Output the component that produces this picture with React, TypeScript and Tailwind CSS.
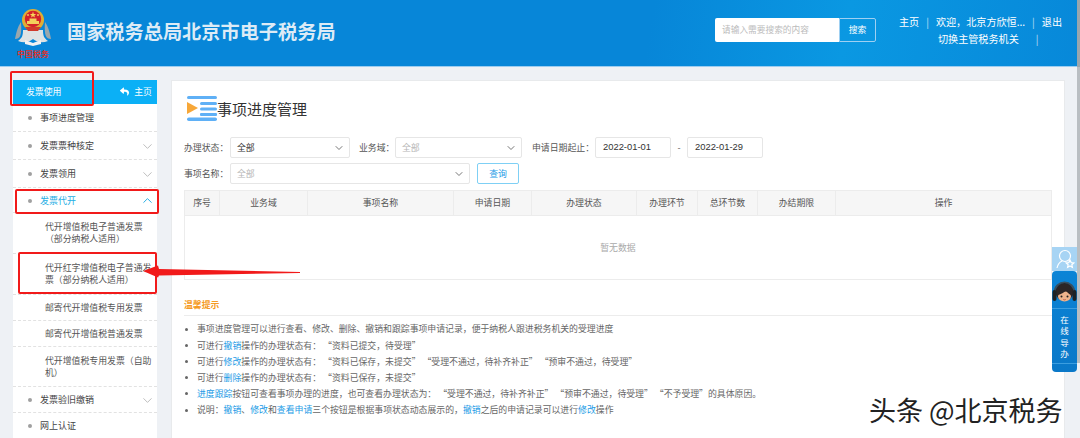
import { ChevronDown, ChevronUp } from "lucide-react";
import { FaReply } from "react-icons/fa";

const font = "font-['Noto_Sans_CJK_SC','Noto_Sans',sans-serif]";

function Emblem() {
  return (
    <svg width="40" height="38" viewBox="0 0 40 38" className="block">
      <path d="M2 31 C7 31 9 28 8 14 C5 18 3 25 2 31Z" fill="#9aa7ac" />
      <path d="M38 31 C33 31 31 28 32 14 C35 18 37 25 38 31Z" fill="#9aa7ac" />
      <path d="M5 33 C10 35 15 35 20 31 C25 35 30 35 35 33 C31 30 30 28 30 22 L10 22 C10 28 9 30 5 33Z" fill="#dfe3e4" />
      <path d="M12 32 L20 35 L28 32 L28 36 L20 38 L12 36Z" fill="#f2f2f2" />
      <circle cx="20" cy="12" r="11" fill="#e0ad33" />
      <circle cx="20" cy="11" r="8.2" fill="#d3212a" />
      <rect x="14" y="13" width="12" height="3" fill="#f3cf5b" />
      <rect x="16.5" y="10.5" width="7" height="2.5" fill="#f3cf5b" />
      <path d="M20 3.5 L20.8 6 L23.2 6 L21.3 7.4 L22 9.6 L20 8.3 L18 9.6 L18.7 7.4 L16.8 6 L19.2 6Z" fill="#f7d65a" />
      <circle cx="15" cy="7" r="0.9" fill="#f7d65a" />
      <circle cx="25" cy="7" r="0.9" fill="#f7d65a" />
      <path d="M12 19 L28 19 L25 23 L15 23Z" fill="#d03a2c" />
    </svg>
  );
}

function TitleIcon() {
  return (
    <svg width="32" height="27" viewBox="0 0 32 27" className="block">
      <rect x="1" y="1" width="30" height="3" rx="1.5" fill="#5fb0f6" />
      <path d="M1 7 L12 13 L1 19Z" fill="#f7a738" />
      <rect x="14" y="7" width="17" height="3" rx="1.5" fill="#5fb0f6" />
      <rect x="14" y="12.5" width="17" height="3" rx="1.5" fill="#5fb0f6" />
      <rect x="14" y="18" width="17" height="3" rx="1" fill="#5fb0f6" />
      <rect x="1" y="22.5" width="30" height="3.5" rx="1.75" fill="#5fb0f6" />
    </svg>
  );
}

function Row({ label, h, arrow, active }: { label: string; h: string; arrow?: boolean; active?: boolean }) {
  return (
    <div className={`${h} flex items-center pt-[1px] pl-[15px] pr-[2px] border-b border-dashed border-[#e2e2e2]`}>
      <span className="w-[4px] h-[4px] rounded-full bg-[#a0a0a0] mr-[8px] shrink-0" />
      <span className={`flex-1 text-[9px] ${active ? "text-[#25aee4]" : "text-[#444]"}`}>{label}</span>
      {arrow && !active && <ChevronDown className="w-[15px] h-[15px] text-[#b4b4b4]" strokeWidth={1.4} />}
      {active && <ChevronUp className="w-[15px] h-[15px] text-[#25aee4]" strokeWidth={1.6} />}
    </div>
  );
}

function SubRow({ h, lines }: { h: string; lines: string[] }) {
  return (
    <div className={`${h} flex flex-col justify-center pl-[32px] pr-[3px] border-b border-dashed border-[#e2e2e2] text-[8.9px] leading-[12px] text-[#555]`}>
      {lines.map((l) => (
        <div key={l} className="whitespace-nowrap">{l}</div>
      ))}
    </div>
  );
}

function Sel({ w, text, dim }: { w: string; text: string; dim?: boolean }) {
  return (
    <div className={`${w} h-[21px] flex items-center justify-between pl-[6px] pr-[4px] border border-[#e6e6e6] rounded-[2px] bg-white text-[8.9px] ${dim ? "text-[#b5b5b5]" : "text-[#333]"}`}>
      <span>{text}</span>
      <ChevronDown className="w-[12px] h-[12px] text-[#777]" />
    </div>
  );
}

const cols: [string, string][] = [
  ["序号", "w-[35px]"],
  ["业务域", "w-[88px]"],
  ["事项名称", "w-[146px]"],
  ["申请日期", "w-[78px]"],
  ["办理状态", "w-[105px]"],
  ["办理环节", "w-[61px]"],
  ["总环节数", "w-[60px]"],
  ["办结期限", "w-[78px]"],
  ["操作", "flex-1"],
];

function B({ children }: { children: string }) {
  return <span className="text-[#1c9be6]">{children}</span>;
}

function Tip({ children }: { children: React.ReactNode }) {
  return (
    <li className="h-[16.2px] flex items-center whitespace-nowrap">
      <span className="w-[3px] h-[3px] rounded-full bg-[#666] ml-[1px] mr-[9px] shrink-0" />
      <span>{children}</span>
    </li>
  );
}

export default function App() {
  return (
    <div lang="zh-CN" className={`relative w-[1080px] h-[438px] overflow-hidden bg-[#eef1f5] ${font}`}>
      {/* top bar */}
      <header className="h-[67px] flex items-center border-b border-[#9dcdf0] bg-[linear-gradient(100deg,#0786d8_0%,#0786d8_60%,#0a98e2_78%,#0788d9_100%)] text-white">
        <div className="ml-[13px] flex flex-col items-center w-[40px]">
          <Emblem />
          <span className="mt-[3px] text-[8px] leading-[10px] font-bold text-[#d8332f] whitespace-nowrap">中国税务</span>
        </div>
        <h1 className="ml-[14px] -mt-[3px] text-[19.2px] font-bold text-[#dcebf6] whitespace-nowrap">国家税务总局北京市电子税务局</h1>
        <div className="ml-auto flex items-center -mt-[6px]">
          <div className="w-[124px] h-[24px] bg-white rounded-l-[2px] flex items-center pl-[7px] text-[8.7px] text-[#bbb]">请输入需要搜索的内容</div>
          <div className="w-[37px] h-[24px] border border-[#9fd0f2] rounded-r-[2px] flex items-center justify-center text-[8.9px]">搜索</div>
        </div>
        <div className="w-[178px] ml-[23px] -mt-[6px] text-[10.1px] leading-[17px] whitespace-nowrap">
          <div className="flex">
            <span>主页</span>
            <span className="mx-[7px] opacity-70">|</span>
            <span>{"欢迎\uFF0C北京方欣恒..."}</span>
            <span className="mx-[7px] opacity-70">|</span>
            <span>退出</span>
          </div>
          <div className="flex pl-[39px]">
            <span>切换主管税务机关</span>
            <span className="ml-[17px] opacity-70">|</span>
          </div>
        </div>
        <div className="w-[3px] h-[67px] bg-[#9aa6ad]" />
      </header>

      <div className="flex pt-[13px] pl-[13px]">
        {/* left menu */}
        <aside className="w-[144px] bg-white shrink-0 h-[360px]">
          <div className="h-[24px] bg-[#0bb0f6] text-white flex items-center justify-between pl-[13px] pr-[5px] text-[8.9px]">
            <span>发票使用</span>
            <span className="flex items-center gap-[5px]">
              <FaReply className="w-[9px] h-[9px]" />
              主页
            </span>
          </div>
          <Row label="事项进度管理" h="h-[28px]" />
          <Row label="发票票种核定" h="h-[28px]" arrow />
          <Row label="发票领用" h="h-[28px]" arrow />
          <Row label="发票代开" h="h-[25px]" active />
          <SubRow h="h-[41px]" lines={["代开增值税电子普通发票", "\uFF08部分纳税人适用\uFF09"]} />
          <SubRow h="h-[41px]" lines={["代开红字增值税电子普通发", "票\uFF08部分纳税人适用\uFF09"]} />
          <SubRow h="h-[26px]" lines={["邮寄代开增值税专用发票"]} />
          <SubRow h="h-[26px]" lines={["邮寄代开增值税普通发票"]} />
          <SubRow h="h-[40px]" lines={["代开增值税专用发票\uFF08自助", "机\uFF09"]} />
          <Row label="发票验旧缴销" h="h-[26px]" arrow />
          <Row label="网上认证" h="h-[26px]" />
        </aside>

        {/* main card */}
        <main className="ml-[14px] w-[894px] h-[360px] bg-white border border-[#e8eaec] pl-[12px] pr-[12px] text-[#555]">
          <div className="flex items-center h-[27px] mt-[14px] ml-[2px]">
            <TitleIcon />
            <h2 className="-ml-[1px] mt-[2px] text-[15px] text-[#333] whitespace-nowrap">事项进度管理</h2>
          </div>

          <div className="mt-[15px] flex items-center h-[21px] text-[8.9px]">
            <span className="w-[46px]">{"办理状态\uFF1A"}</span>
            <Sel w="w-[120px]" text="全部" />
            <span className="ml-[9px] w-[36px]">{"业务域\uFF1A"}</span>
            <Sel w="w-[127px]" text="全部" dim />
            <span className="ml-[10px] w-[63px]">{"申请日期起止\uFF1A"}</span>
            <div className="w-[76px] h-[21px] border border-[#e6e6e6] rounded-[2px] flex items-center pl-[7px] text-[#333] font-['Liberation_Sans'] text-[9.4px]">2022-01-01</div>
            <span className="w-[16px] text-center">-</span>
            <div className="w-[76px] h-[21px] border border-[#e6e6e6] rounded-[2px] flex items-center pl-[7px] text-[#333] font-['Liberation_Sans'] text-[9.4px]">2022-01-29</div>
          </div>

          <div className="mt-[5px] flex items-center h-[21px] text-[8.9px]">
            <span className="w-[46px]">{"事项名称\uFF1A"}</span>
            <Sel w="w-[240px]" text="全部" dim />
            <div className="ml-[7px] w-[42px] h-[21px] border border-[#7fd0f5] rounded-[2px] flex items-center justify-center text-[#1c9be6]">查询</div>
          </div>

          <div className="mt-[6px] border-l border-r border-[#ececec] h-[90px] border-b">
            <div className="flex h-[26px] bg-[#f6f6f6] border-t border-b border-[#ececec] text-[8.9px]">
              {cols.map(([name, w]) => (
                <div key={name} className={`${w} flex items-center justify-center border-r border-[#ececec] last:border-r-0`}>{name}</div>
              ))}
            </div>
            <div className="h-[63px] flex items-center justify-center text-[8.9px] text-[#aaa]">暂无数据</div>
          </div>

          <div className="mt-[16px] text-[8.9px] font-bold text-[#f59a23] h-[17px] flex items-center">温馨提示</div>
          <div className="h-px bg-[#ececec] mt-[2px]" />
          <ul className="mt-[5px] text-[8.87px] text-[#666]">
            <Tip>{"事项进度管理可以进行查看、修改、删除、撤销和跟踪事项申请记录\uFF0C便于纳税人跟进税务机关的受理进度"}</Tip>
            <Tip>可进行<B>撤销</B>{"操作的办理状态有\uFF1A \u201C资料已提交\uFF0C待受理\u201D"}</Tip>
            <Tip>可进行<B>修改</B>{"操作的办理状态有\uFF1A \u201C资料已保存\uFF0C未提交\u201D \u201C受理不通过\uFF0C待补齐补正\u201D \u201C预审不通过\uFF0C待受理\u201D"}</Tip>
            <Tip>可进行<B>删除</B>{"操作的办理状态有\uFF1A \u201C资料已保存\uFF0C未提交\u201D"}</Tip>
            <Tip><B>进度跟踪</B>{"按钮可查看事项办理的进度\uFF0C也可查看办理状态为\uFF1A \u201C受理不通过\uFF0C待补齐补正\u201D \u201C预审不通过\uFF0C待受理\u201D \u201C不予受理\u201D的具体原因。"}</Tip>
            <Tip>{"说明\uFF1A"}<B>撤销</B>、<B>修改</B>和<B>查看申请</B>{"三个按钮是根据事项状态动态展示的\uFF0C"}<B>撤销</B>之后的申请记录可以进行<B>修改</B>操作</Tip>
          </ul>
        </main>
      </div>

      {/* scroll gutter */}
      <div className="absolute right-0 top-[67px] w-[3px] h-[296px] bg-[#b9bec2]" />

      {/* floating helper */}
      <div className="absolute left-[1052px] top-[247px] w-[25px]">
        <div className="h-[24px] bg-[#a7d4f4] flex items-center justify-center">
          <svg width="20" height="20" viewBox="0 0 20 20" fill="none" stroke="#fff" strokeWidth="1.2">
            <circle cx="10" cy="7" r="5.5" />
            <path d="M2 19 C3 14 5 13 7 12" />
            <path d="M15 11 l1.2 2.6 2.6 .3 -2 1.8 .6 2.7 -2.4 -1.4 -2.4 1.4 .6 -2.7 -2 -1.8 2.6 -.3Z" />
          </svg>
        </div>
        <div className="h-[101px] bg-[linear-gradient(180deg,#0b84d6,#0a78c8)] rounded-[4px] flex flex-col items-center text-white">
          <svg width="25" height="23" viewBox="0 0 25 23" className="mt-[10px] mb-[4px]">
            <path d="M2.5 12 C2.5 -2 22.5 -2 22.5 12" fill="none" stroke="#39505f" strokeWidth="2" />
            <ellipse cx="12.5" cy="11" rx="9" ry="9" fill="#2c2626" />
            <ellipse cx="12.5" cy="15.5" rx="6.5" ry="5" fill="#eeb48c" />
            <path d="M6 14 C9 13 12 11.5 14 9.5 C15.5 12 17 13 19 14 L19 8 L6 8Z" fill="#2c2626" />
            <rect x="0.5" y="9" width="4" height="11" rx="2" fill="#1d2225" />
            <rect x="20.5" y="9" width="4" height="11" rx="2" fill="#1d2225" />
            <circle cx="9.5" cy="15.5" r="1" fill="#222" />
            <circle cx="15.5" cy="15.5" r="1" fill="#222" />
            <path d="M11.3 18.5 Q12.5 19.3 13.7 18.5" stroke="#b5493a" strokeWidth="0.8" fill="none" />
          </svg>
          <div className="w-full h-px bg-[#3b9ee0]" />
          <div className="mt-[5px] flex flex-col items-center text-[8.5px] leading-[11.4px]">
            <span>在</span>
            <span>线</span>
            <span>导</span>
            <span>办</span>
          </div>
          <div className="w-full h-px bg-[#3b9ee0] mt-[3px]" />
        </div>
      </div>

      {/* annotations drawn on the screenshot */}
      <div className="absolute left-[10px] top-[71px] w-[84px] h-[35px] border-2 border-[#f11a1a] rounded-[2px]" />
      <div className="absolute left-[15px] top-[189px] w-[144px] h-[25px] border-2 border-[#f11a1a] rounded-[2px]" />
      <div className="absolute left-[18px] top-[252px] w-[139px] h-[42px] border-2 border-[#f11a1a] rounded-[2px]" />
      <svg className="absolute left-[140px] top-[262px]" width="165" height="20" viewBox="0 0 165 20">
        <path d="M3 9 L18 3.5 L19 7 L160 10 L160 11 L19 13.5 L18 15.5Z" fill="#f11a1a" />
      </svg>

      <div className="absolute left-[869px] top-[391px] text-[27px] leading-[38px] text-[#222] whitespace-nowrap [text-shadow:1px_1px_0_#fff]">头条 @北京税务</div>
    </div>
  );
}
